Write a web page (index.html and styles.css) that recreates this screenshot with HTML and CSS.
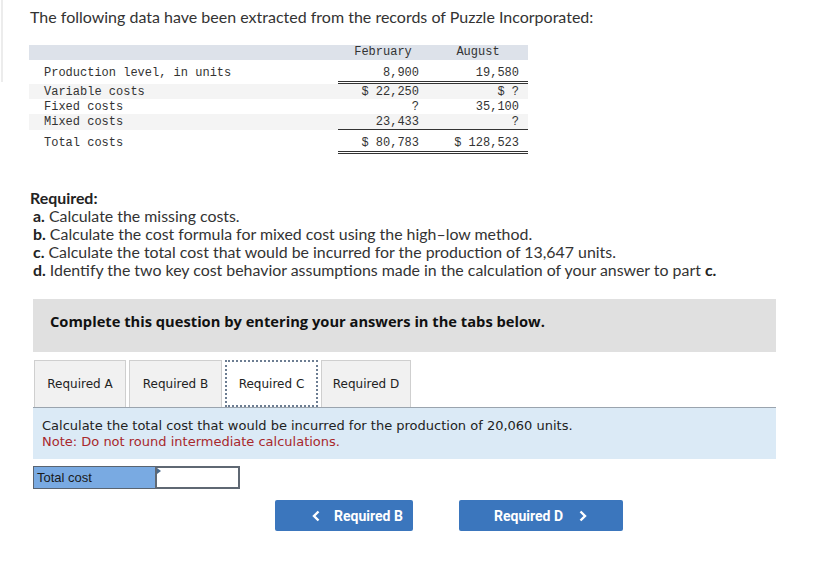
FILE: index.html
```html
<!DOCTYPE html>
<html>
<head>
<meta charset="utf-8">
<link rel="stylesheet" href="styles.css">
</head>
<body>
<div class="page">
  <p class="intro">The following data have been extracted from the records of Puzzle Incorporated:</p>

  <table class="data">
    <tr class="head">
      <td class="lbl"></td><td class="num c">February</td><td class="num c">August</td>
    </tr>
    <tr class="prod">
      <td class="lbl">Production level, in units</td><td class="num">8,900</td><td class="num">19,580</td>
    </tr>
    <tr class="stripe">
      <td class="lbl">Variable costs</td><td class="num">$ 22,250</td><td class="num">$ ?</td>
    </tr>
    <tr>
      <td class="lbl">Fixed costs</td><td class="num">?</td><td class="num">35,100</td>
    </tr>
    <tr class="stripe mixed">
      <td class="lbl">Mixed costs</td><td class="num">23,433</td><td class="num">?</td>
    </tr>
    <tr class="total">
      <td class="lbl">Total costs</td><td class="num">$ 80,783</td><td class="num">$ 128,523</td>
    </tr>
  </table>

  <div class="required">
    <div class="req-title">Required:</div>
    <div class="req-line"><b>a.</b> Calculate the missing costs.</div>
    <div class="req-line"><b>b.</b> Calculate the cost formula for mixed cost using the high–low method.</div>
    <div class="req-line"><b>c.</b> Calculate the total cost that would be incurred for the production of 13,647 units.</div>
    <div class="req-line"><b>d.</b> Identify the two key cost behavior assumptions made in the calculation of your answer to part <b>c.</b></div>
  </div>

  <div class="instr">Complete this question by entering your answers in the tabs below.</div>

  <div class="tabs">
    <div class="tab tab-a">Required A</div>
    <div class="tab tab-b">Required B</div>
    <div class="tab tab-c active">Required C</div>
    <div class="tab tab-d">Required D</div>
  </div>

  <div class="panel">
    <div>Calculate the total cost that would be incurred for the production of 20,060 units.</div>
    <div class="note">Note: Do not round intermediate calculations.</div>
  </div>

  <div class="answer">
    <div class="ans-label">Total cost</div>
    <div class="ans-input"><span class="marker"></span></div>
  </div>

  <div class="nav">
    <div class="btn btn-prev"><svg class="chev" width="8" height="12" viewBox="0 0 8 12"><polyline points="6.5,1.5 2,6 6.5,10.5" fill="none" stroke="#fff" stroke-width="2.4"/></svg><span>Required B</span></div>
    <div class="btn btn-next"><span>Required D</span><svg class="chev" width="8" height="12" viewBox="0 0 8 12"><polyline points="1.5,1.5 6,6 1.5,10.5" fill="none" stroke="#fff" stroke-width="2.4"/></svg></div>
  </div>
</div>
</body>
</html>
```
FILE: styles.css
```css
* { box-sizing: border-box; }
html, body { margin: 0; padding: 0; }
body {
  font-family: Lato, "Open Sans", sans-serif;
  color: #333;
  width: 818px;
  height: 586px;
  overflow: hidden;
  background: #fff linear-gradient(#ececec, #ececec) 1px 0 / 2px 82px no-repeat;
}
.page {
  padding-top: 8px;
}
.intro {
  margin: 0 0 0 30px;
  font-size: 16px;
  line-height: 18px;
  color: #333;
}

.data {
  margin: 19px 0 0 29px;
  border-collapse: separate;
  border-spacing: 0;
  font-family: "Liberation Mono", "DejaVu Sans Mono", monospace;
  font-size: 12px;
  color: #333;
}
.data td {
  padding: 2px 0 0;
  line-height: 13px;
  height: 15px;
  vertical-align: top;
}
.data .lbl { width: 309px; padding-left: 15px; }
.data .num { text-align: right; padding-right: 9px; }
.data td:nth-child(2) { width: 90px; }
.data td:nth-child(3) { width: 100px; }
.data .num.c { text-align: center; padding-right: 0; }
.data .head td { background: #dde2ea; height: 15px; line-height: 13px; padding-top: 1px; }
.data .prod td { height: 24px; padding-top: 7px; }
.data .prod .num { border-bottom: 3px double #333; }
.data .stripe td { background: #f4f4f4; }
.data .mixed .num { height: 16px; border-bottom: 1px solid #333; }
.data .total td { height: 24px; padding-top: 7px; }
.data .total .num { border-bottom: 3px double #333; }

.required {
  margin: 35px 0 0 30px;
  font-size: 15.9px;
  line-height: 18px;
}
.req-title { font-weight: bold; color: #222; }
.req-line { padding-left: 3px; }
.req-line b { color: #222; }

.instr {
  margin: 20px 0 0 33px;
  width: 743px;
  height: 53px;
  background: #e0e0e0;
  padding: 13px 0 0 17px;
  font-family: "Open Sans", sans-serif;
  font-weight: bold;
  font-size: 14.7px;
  line-height: 18px;
  color: #111;
}

.tabs {
  display: flex;
  gap: 3px;
  margin: 8px 0 0 34px;
  height: 47px;
}
.tab {
  background: #f1f1f1;
  border: 1px solid #cfcfcf;
  border-bottom: none;
  font-family: "DejaVu Sans", sans-serif;
  font-size: 12px;
  color: #222;
  display: flex;
  align-items: center;
  justify-content: center;
}
.tab-a { width: 92px; }
.tab-b { width: 93px; }
.tab-c { width: 93px; }
.tab-d { width: 90px; }
.tab.active { background: #fff; border: 2px dotted #6c7d92; }

.panel {
  margin-left: 33px;
  width: 743px;
  height: 52px;
  background: #dbeaf6;
  border-top: 1px solid #9aa4ae;
  padding: 10px 0 0 9px;
  font-family: "DejaVu Sans", sans-serif;
  font-size: 13px;
  line-height: 16px;
  color: #222;
}
.note { color: #a8282c; }

.answer {
  display: flex;
  margin: 7px 0 0 33px;
  height: 23px;
}
.ans-label {
  width: 122px;
  background: #79aae2;
  border: 1px solid #5a6470;
  border-right: none;
  font-family: "Liberation Sans", Arial, sans-serif;
  font-size: 13px;
  color: #1a1a1a;
  padding: 3px 0 0 3px;
}
.ans-input {
  position: relative;
  width: 85px;
  border: 2px solid #5f6873;
  background: #fff;
}
.marker {
  position: absolute;
  left: 0;
  top: 0;
  width: 0;
  height: 0;
  border-top: 3px solid transparent;
  border-bottom: 3px solid transparent;
  border-left: 4px solid #4a6a8c;
}

.nav {
  display: flex;
  gap: 46px;
  margin: 11px 0 0 275px;
}
.btn {
  height: 31px;
  background: #3b76bd;
  color: #fff;
  font-family: Roboto, "Liberation Sans", sans-serif;
  font-weight: bold;
  font-size: 14px;
  display: flex;
  align-items: center;
  border-radius: 2px;
}
.btn-prev { width: 138px; padding-left: 37px; }
.btn-next { width: 164px; padding-left: 35px; }
.btn-prev .chev { margin-right: 14px; }
.btn-next .chev { margin-left: 16px; }
```
